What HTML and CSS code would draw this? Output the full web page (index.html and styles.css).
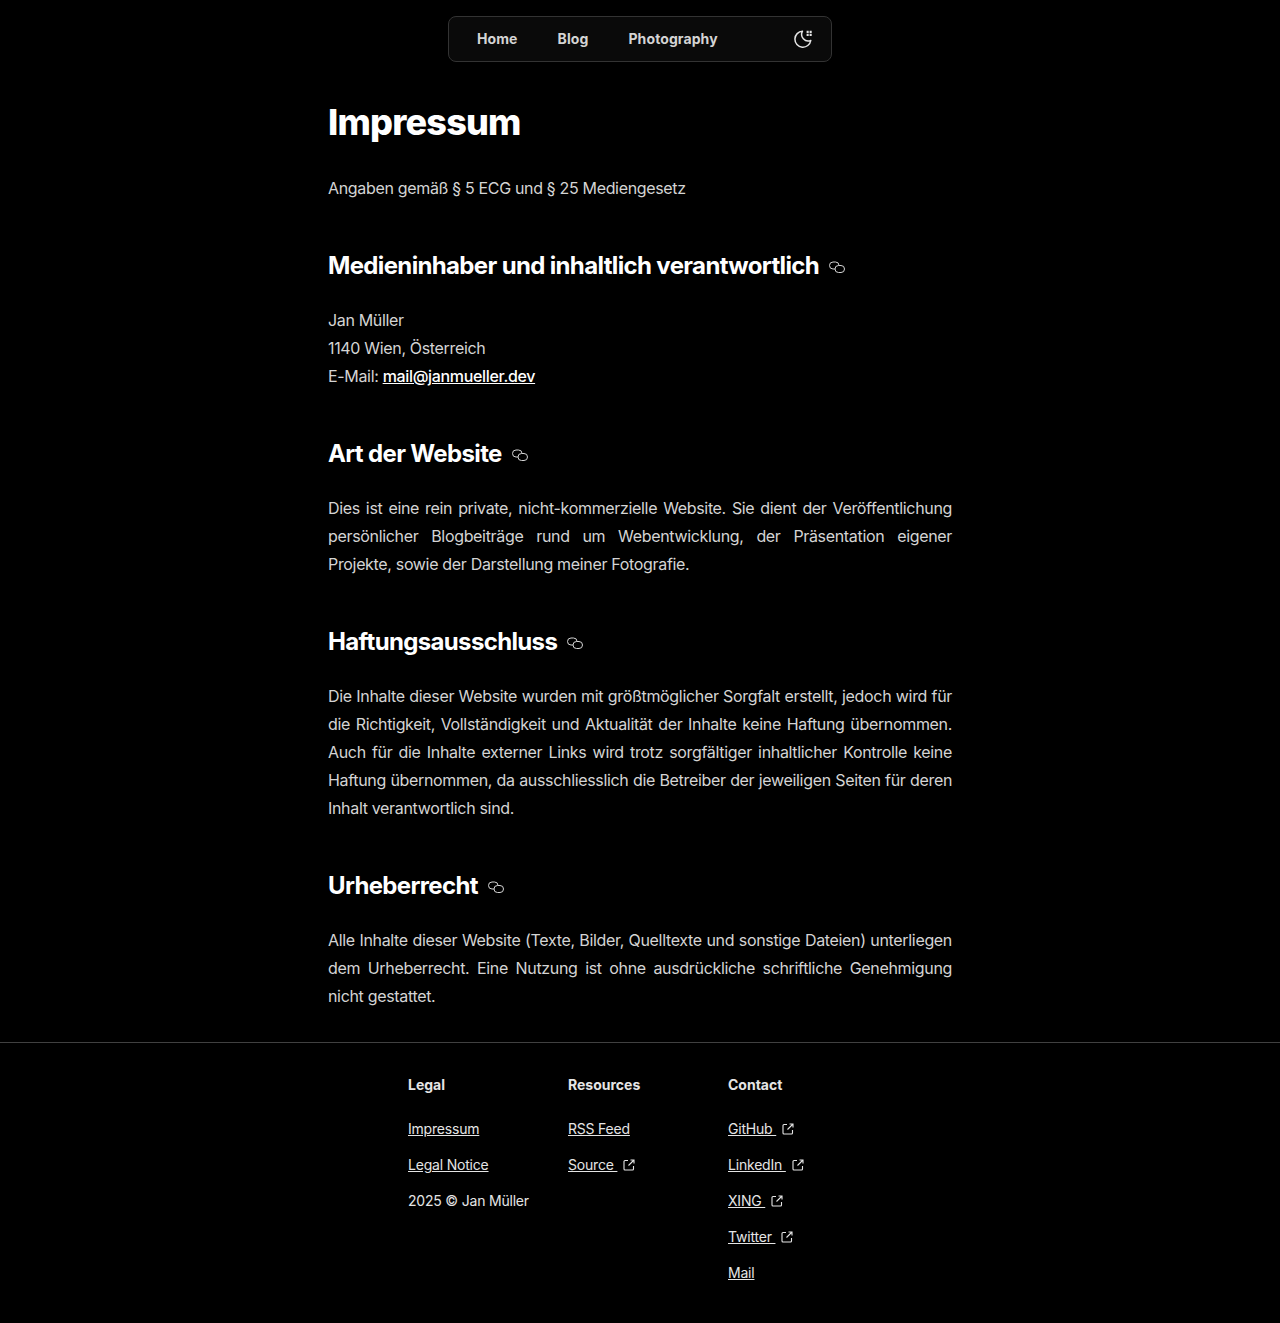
FILE: index.html
```html
<!DOCTYPE html>
<html lang="de">
  <head>
    <meta charset="utf-8" />
    <title>Impressum</title>
    <meta name="viewport" content="width=device-width, initial-scale=1" />
    <link rel="stylesheet" href="styles.css">
  </head>
  <body>
    <nav class="topnav">
      <div class="topnav-links">
        <a href="#">Home</a>
        <a href="#">Blog</a>
        <a href="#">Photography</a>
      </div>
      <svg class="theme-icon" viewBox="0 0 20 20">
        <path d="M9.500 2.200a8 8 0 1 0 8.300 9.300 6.600 6.600 0 0 1-8.300-9.300z" fill="none" stroke="currentColor" stroke-width="1.500" stroke-linejoin="round" />
        <path d="M13.600 1.800h2.100v2.100h-2.100zM16.600 1.800h2.100v2.100h-2.100zM13.600 4.800h2.100v2.100h-2.100zM16.600 4.800h2.100v2.100h-2.100z" fill="currentColor" />
      </svg>
    </nav>

    <main class="content">
      <h1>Impressum</h1>
      <p>Angaben gemäß § 5 ECG und § 25 Mediengesetz</p>

      <h2>Medieninhaber und inhaltlich verantwortlich <svg class="anchor-icon" viewBox="0 0 16 16"><use href="#link-icon" /></svg></h2>
      <p>
        Jan Müller<br />
        1140 Wien, Österreich<br />
        E-Mail: <a href="#">mail@janmueller.dev</a>
      </p>

      <h2>Art der Website <svg class="anchor-icon" viewBox="0 0 16 16"><use href="#link-icon" /></svg></h2>
      <p>Dies ist eine rein private, nicht-kommerzielle Website. Sie dient der Veröffentlichung persönlicher Blogbeiträge rund um Webentwicklung, der Präsentation eigener Projekte, sowie der Darstellung meiner Fotografie.</p>

      <h2>Haftungsausschluss <svg class="anchor-icon" viewBox="0 0 16 16"><use href="#link-icon" /></svg></h2>
      <p>Die Inhalte dieser Website wurden mit größtmöglicher Sorgfalt erstellt, jedoch wird für die Richtigkeit, Vollständigkeit und Aktualität der Inhalte keine Haftung übernommen. Auch für die Inhalte externer Links wird trotz sorgfältiger inhaltlicher Kontrolle keine Haftung übernommen, da ausschliesslich die Betreiber der jeweiligen Seiten für deren Inhalt verantwortlich sind.</p>

      <h2>Urheberrecht <svg class="anchor-icon" viewBox="0 0 16 16"><use href="#link-icon" /></svg></h2>
      <p>Alle Inhalte dieser Website (Texte, Bilder, Quelltexte und sonstige Dateien) unterliegen dem Urheberrecht. Eine Nutzung ist ohne ausdrückliche schriftliche Genehmigung nicht gestattet.</p>
    </main>

    <footer class="footer">
      <div class="footer-cols">
        <div class="footer-col">
          <h3>Legal</h3>
          <ul>
            <li><a href="#">Impressum</a></li>
            <li><a href="#">Legal Notice</a></li>
            <li>2025 © Jan Müller</li>
          </ul>
        </div>
        <div class="footer-col">
          <h3>Resources</h3>
          <ul>
            <li><a href="#">RSS Feed</a></li>
            <li><a href="#">Source&nbsp;</a><svg class="ext-icon" viewBox="0 0 12 12"><use href="#ext-icon" /></svg></li>
          </ul>
        </div>
        <div class="footer-col">
          <h3>Contact</h3>
          <ul>
            <li><a href="#">GitHub&nbsp;</a><svg class="ext-icon" viewBox="0 0 12 12"><use href="#ext-icon" /></svg></li>
            <li><a href="#">LinkedIn&nbsp;</a><svg class="ext-icon" viewBox="0 0 12 12"><use href="#ext-icon" /></svg></li>
            <li><a href="#">XING&nbsp;</a><svg class="ext-icon" viewBox="0 0 12 12"><use href="#ext-icon" /></svg></li>
            <li><a href="#">Twitter&nbsp;</a><svg class="ext-icon" viewBox="0 0 12 12"><use href="#ext-icon" /></svg></li>
            <li><a href="#">Mail</a></li>
          </ul>
        </div>
      </div>
    </footer>

    <svg class="icon-defs" aria-hidden="true">
      <symbol id="link-icon" viewBox="0 0 16 16">
        <path d="M6 10H4a3.500 3.500 0 0 1 0-7h2.500a3.500 3.500 0 0 1 3.500 3.500" fill="none" stroke="currentColor" stroke-width="1" />
        <path d="M9.500 6.500H12a3.500 3.500 0 0 1 0 7H9.500A3.500 3.500 0 0 1 6 10a3.500 3.500 0 0 1 3.500-3.500z" fill="none" stroke="currentColor" stroke-width="1" />
      </symbol>
      <symbol id="ext-icon" viewBox="0 0 12 12">
        <path d="M5 1.500H2a1 1 0 0 0-1 1v7.500a1 1 0 0 0 1 1h7.500a1 1 0 0 0 1-1V7M5.500 6.500l5-5M7.500 1h3.500v3.500" fill="none" stroke="currentColor" stroke-width="1.100" />
      </symbol>
    </svg>
  </body>
</html>
```

FILE: styles.css
```css
* {
  box-sizing: border-box;
}
body {
  margin: 0;
  background: #000;
  color: #d4d4d4;
  font-family: Inter, "Liberation Sans", sans-serif;
  font-size: 16px;
  line-height: 28px;
}
a {
  color: inherit;
}

.topnav {
  width: 384px;
  height: 46px;
  margin: 16px auto 0;
  padding: 0 18px 0 28px;
  display: flex;
  align-items: center;
  justify-content: space-between;
  background: #0a0a0a;
  border: 1px solid #333;
  border-radius: 8px;
}
.topnav-links {
  display: flex;
  gap: 40px;
}
.topnav-links a {
  color: #d4d4d4;
  font-size: 14px;
  font-weight: 700;
  line-height: 20px;
  letter-spacing: 0.1px;
  text-decoration: none;
}
.theme-icon {
  width: 20px;
  height: 20px;
  color: #e5e5e5;
}

.content {
  width: 624px;
  margin: 0 auto;
  padding: 40px 0 32px;
}
.content h1 {
  margin: 0 0 32px;
  color: #fff;
  font-size: 36px;
  font-weight: 800;
  line-height: 40px;
  letter-spacing: -0.8px;
}
.content h2 {
  margin: 48px 0 24px;
  color: #fff;
  font-size: 24px;
  font-weight: 700;
  line-height: 32px;
  letter-spacing: -0.65px;
}
.content p {
  margin: 0;
  text-align: justify;
  letter-spacing: -0.33px;
}
.content p a {
  color: #fff;
  font-weight: 500;
}
.anchor-icon {
  width: 16px;
  height: 16px;
  margin-left: 5px;
  vertical-align: -1px;
  color: #d4d4d4;
}

.footer {
  border-top: 1px solid #404040;
  padding: 32px 0 40px;
  color: #e5e5e5;
  font-size: 14px;
  line-height: 20px;
  letter-spacing: -0.2px;
}
.footer-cols {
  width: 464px;
  margin: 0 auto;
  display: grid;
  grid-template-columns: repeat(3, 160px);
}
.footer-col h3 {
  margin: 0 0 24px;
  color: #e5e5e5;
  font-size: 14px;
  font-weight: 700;
  line-height: 20px;
  letter-spacing: 0;
}
.footer-col ul {
  margin: 0;
  padding: 0;
  list-style: none;
  display: flex;
  flex-direction: column;
  gap: 16px;
}
.ext-icon {
  width: 12px;
  height: 12px;
  margin-left: 6px;
  vertical-align: -1px;
}
.icon-defs {
  position: absolute;
  width: 0;
  height: 0;
}
```
